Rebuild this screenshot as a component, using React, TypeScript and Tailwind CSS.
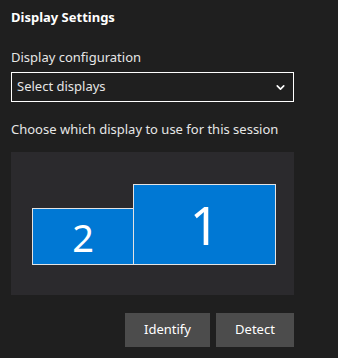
import { ChevronDown } from 'lucide-react';

const font = { fontFamily: '"Segoe UI", "Noto Sans", "Open Sans", sans-serif' };

export default function App() {
    return (
        <div className="w-[338px] h-[358px] bg-[#1f1f1f] text-[#e6e6e6] px-[11px] pt-[6px]" style={font}>
            <h2 className="text-[13px] font-bold text-white leading-[22px]">Display Settings</h2>

            <p className="mt-[20px] text-[13px] leading-[18px]">Display configuration</p>
            <button className="mt-[6px] w-[283px] h-[30px] border border-white bg-[#1f1f1f] flex items-center justify-between pl-[5px] pr-[6px] text-[13px] text-[#e6e6e6]">
                <span>Select displays</span>
                <ChevronDown className="w-[13px] h-[13px] text-white" strokeWidth={3} />
            </button>

            <p className="mt-[18px] text-[13px] leading-[18px]">Choose which display to use for this session</p>

            {/* Display arrangement */}
            <div className="mt-[14px] w-[283px] h-[143px] bg-[#2b2a2d] flex items-end pl-[21px] pb-[30px]">
                <div className="w-[102px] h-[57px] bg-[#0078d4] border border-[#e3e3e3] flex items-center justify-center text-white text-[38px] font-normal leading-none">
                    2
                </div>
                <div className="w-[143px] h-[81px] bg-[#0078d4] border border-[#e3e3e3] flex items-center justify-center text-white text-[52px] font-normal leading-none -ml-px">
                    1
                </div>
            </div>

            <div className="mt-[18px] w-[283px] flex justify-end gap-[6px]">
                <button className="w-[85px] h-[34px] bg-[#4c4c4c] text-[13px] text-white">Identify</button>
                <button className="w-[78px] h-[34px] bg-[#4c4c4c] text-[13px] text-white">Detect</button>
            </div>
        </div>
    );
}
